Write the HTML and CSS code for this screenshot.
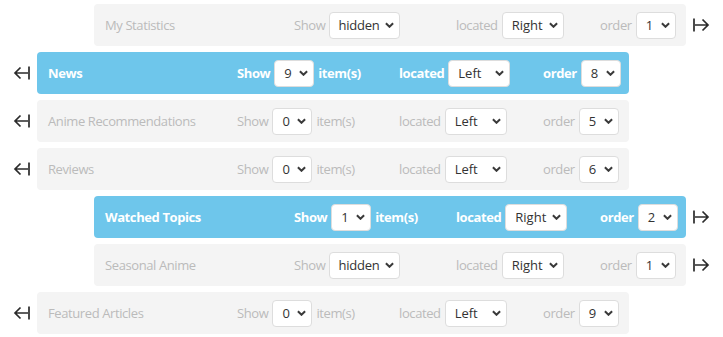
FILE: index.html
```html
<!DOCTYPE html>
<html lang="en">
<head>
    <meta charset="UTF-8">
    <meta name="viewport" content="width=device-width, initial-scale=1.0">
    <title>Block Layout</title>
    <link rel="stylesheet" href="styles.css">
</head>
<body>
    <div class="blocks">
        <div class="block-row right">
            <div class="panel">
                <div class="title">My Statistics</div>
                <div class="field"><span>Show</span><span class="select wide">hidden<svg viewBox="0 0 10 6"><path d="M1 1l4 4 4-4"/></svg></span></div>
                <div class="field"><span>located</span><span class="select mid">Right<svg viewBox="0 0 10 6"><path d="M1 1l4 4 4-4"/></svg></span></div>
                <div class="field"><span>order</span><span class="select num">1<svg viewBox="0 0 10 6"><path d="M1 1l4 4 4-4"/></svg></span></div>
            </div>
            <svg class="move" viewBox="0 0 18 16"><path d="M2 1.5v13M3 8h13.5M10.5 2.5L16 8l-5.5 5.5"/></svg>
        </div>

        <div class="block-row left">
            <svg class="move" viewBox="0 0 18 16"><path d="M16 1.5v13M15 8H1.5M7.5 2.5L2 8l5.5 5.5"/></svg>
            <div class="panel active">
                <div class="title">News</div>
                <div class="field"><span>Show</span><span class="select num">9<svg viewBox="0 0 10 6"><path d="M1 1l4 4 4-4"/></svg></span><span>item(s)</span></div>
                <div class="field"><span>located</span><span class="select mid">Left<svg viewBox="0 0 10 6"><path d="M1 1l4 4 4-4"/></svg></span></div>
                <div class="field"><span>order</span><span class="select num">8<svg viewBox="0 0 10 6"><path d="M1 1l4 4 4-4"/></svg></span></div>
            </div>
        </div>

        <div class="block-row left">
            <svg class="move" viewBox="0 0 18 16"><path d="M16 1.5v13M15 8H1.5M7.5 2.5L2 8l5.5 5.5"/></svg>
            <div class="panel">
                <div class="title">Anime Recommendations</div>
                <div class="field"><span>Show</span><span class="select num">0<svg viewBox="0 0 10 6"><path d="M1 1l4 4 4-4"/></svg></span><span>item(s)</span></div>
                <div class="field"><span>located</span><span class="select mid">Left<svg viewBox="0 0 10 6"><path d="M1 1l4 4 4-4"/></svg></span></div>
                <div class="field"><span>order</span><span class="select num">5<svg viewBox="0 0 10 6"><path d="M1 1l4 4 4-4"/></svg></span></div>
            </div>
        </div>

        <div class="block-row left">
            <svg class="move" viewBox="0 0 18 16"><path d="M16 1.5v13M15 8H1.5M7.5 2.5L2 8l5.5 5.5"/></svg>
            <div class="panel">
                <div class="title">Reviews</div>
                <div class="field"><span>Show</span><span class="select num">0<svg viewBox="0 0 10 6"><path d="M1 1l4 4 4-4"/></svg></span><span>item(s)</span></div>
                <div class="field"><span>located</span><span class="select mid">Left<svg viewBox="0 0 10 6"><path d="M1 1l4 4 4-4"/></svg></span></div>
                <div class="field"><span>order</span><span class="select num">6<svg viewBox="0 0 10 6"><path d="M1 1l4 4 4-4"/></svg></span></div>
            </div>
        </div>

        <div class="block-row right">
            <div class="panel active">
                <div class="title">Watched Topics</div>
                <div class="field"><span>Show</span><span class="select num">1<svg viewBox="0 0 10 6"><path d="M1 1l4 4 4-4"/></svg></span><span>item(s)</span></div>
                <div class="field"><span>located</span><span class="select mid">Right<svg viewBox="0 0 10 6"><path d="M1 1l4 4 4-4"/></svg></span></div>
                <div class="field"><span>order</span><span class="select num">2<svg viewBox="0 0 10 6"><path d="M1 1l4 4 4-4"/></svg></span></div>
            </div>
            <svg class="move" viewBox="0 0 18 16"><path d="M2 1.5v13M3 8h13.5M10.5 2.5L16 8l-5.5 5.5"/></svg>
        </div>

        <div class="block-row right">
            <div class="panel">
                <div class="title">Seasonal Anime</div>
                <div class="field"><span>Show</span><span class="select wide">hidden<svg viewBox="0 0 10 6"><path d="M1 1l4 4 4-4"/></svg></span></div>
                <div class="field"><span>located</span><span class="select mid">Right<svg viewBox="0 0 10 6"><path d="M1 1l4 4 4-4"/></svg></span></div>
                <div class="field"><span>order</span><span class="select num">1<svg viewBox="0 0 10 6"><path d="M1 1l4 4 4-4"/></svg></span></div>
            </div>
            <svg class="move" viewBox="0 0 18 16"><path d="M2 1.5v13M3 8h13.5M10.5 2.5L16 8l-5.5 5.5"/></svg>
        </div>

        <div class="block-row left">
            <svg class="move" viewBox="0 0 18 16"><path d="M16 1.5v13M15 8H1.5M7.5 2.5L2 8l5.5 5.5"/></svg>
            <div class="panel">
                <div class="title">Featured Articles</div>
                <div class="field"><span>Show</span><span class="select num">0<svg viewBox="0 0 10 6"><path d="M1 1l4 4 4-4"/></svg></span><span>item(s)</span></div>
                <div class="field"><span>located</span><span class="select mid">Left<svg viewBox="0 0 10 6"><path d="M1 1l4 4 4-4"/></svg></span></div>
                <div class="field"><span>order</span><span class="select num">9<svg viewBox="0 0 10 6"><path d="M1 1l4 4 4-4"/></svg></span></div>
            </div>
        </div>
    </div>
</body>
</html>
```

FILE: styles.css
```css
* {
    margin: 0;
    padding: 0;
    box-sizing: border-box;
}
body {
    font-family: "Open Sans", Arial, sans-serif;
    font-size: 13px;
    letter-spacing: -0.4px;
    background-color: white;
    color: #bbb;
}
.blocks {
    display: flex;
    flex-direction: column;
    gap: 6px;
    padding: 4px 13px;
}
.block-row {
    display: flex;
    align-items: center;
    gap: 6px;
}
.block-row.right {
    justify-content: flex-end;
}
.move {
    width: 18px;
    height: 16px;
    fill: none;
    stroke: #2b2b2b;
    stroke-width: 1.7;
}
.panel {
    width: 592px;
    height: 42px;
    padding-left: 11px;
    background-color: #f4f4f4;
    border-radius: 4px;
    display: grid;
    grid-template-columns: 189px 162px 144px auto;
    align-items: center;
}
.panel.active {
    background-color: #6ec6eb;
    color: white;
    font-weight: bold;
}
.field {
    display: flex;
    align-items: center;
    gap: 4px;
}
.select {
    display: flex;
    align-items: center;
    justify-content: space-between;
    height: 27px;
    padding: 0 5px 0 9px;
    background-color: white;
    border: 1px solid #ddd;
    border-radius: 4px;
    color: #333;
    font-weight: normal;
    letter-spacing: 0;
}
.select svg {
    width: 9px;
    height: 6px;
    fill: none;
    stroke: #3a3a3a;
    stroke-width: 2.2;
}
.select.num {
    width: 40px;
}
.select.mid {
    width: 62px;
}
.select.wide {
    width: 71px;
    padding-left: 8px;
    letter-spacing: -0.2px;
}
```
